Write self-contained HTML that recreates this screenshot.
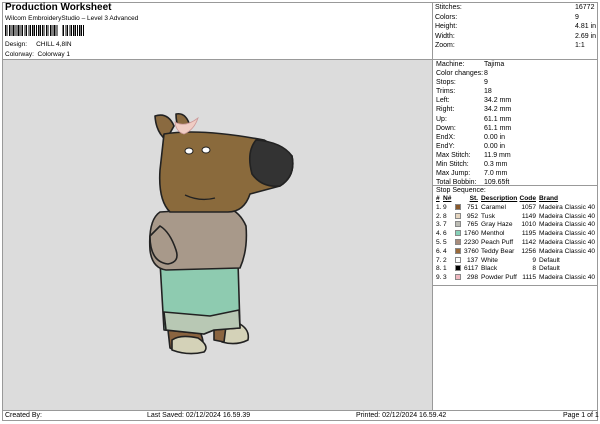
<!DOCTYPE html>
<html><head><style>
*{margin:0;padding:0;box-sizing:border-box}
body{width:600px;height:424px;background:#fff;font-family:"Liberation Sans",Arial,sans-serif;color:#000;position:relative;overflow:hidden}
.a{position:absolute;white-space:nowrap}
.s{font-size:7px}
.ln{position:absolute;background:#999}
table{border-collapse:collapse;font-size:6.6px;table-layout:fixed;width:160px}
td{padding:0;height:8.8px;line-height:8.8px;white-space:nowrap;overflow:visible}
.sw{display:inline-block;width:6px;height:6px;border:1px solid #888;vertical-align:-1px}
.r{text-align:right}
</style></head><body>
<div style="position:absolute;left:2px;top:2px;width:596px;height:419px;border:1px solid #999"></div>
<div class="ln" style="left:432px;top:2px;width:1px;height:408px"></div>
<div class="ln" style="left:2px;top:59px;width:596px;height:1px"></div>
<div class="ln" style="left:2px;top:410px;width:596px;height:1px"></div>
<div style="position:absolute;left:3px;top:60px;width:429px;height:350px;background:#dcdcdc"></div>

<div class="a" style="left:5px;top:2px;font-size:10px;font-weight:bold">Production Worksheet</div>
<div class="a" style="left:5px;top:15px;font-size:6.5px">Wilcom EmbroideryStudio – Level 3 Advanced</div>
<div class="a" style="left:5px;top:25px;width:79px;height:11px;background:repeating-linear-gradient(90deg,#000 0 1.5px,#fff 1.5px 2.4px,#000 2.4px 3.2px,#fff 3.2px 4.1px)"></div>
<div class="a" style="left:58px;top:25px;width:4px;height:12px;background:#fff"></div>
<div class="a" style="left:5px;top:41px;font-size:6.5px">Design:&nbsp;&nbsp;&nbsp;&nbsp;&nbsp;CHILL 4,8IN</div>
<div class="a" style="left:5px;top:51px;font-size:6.5px">Colorway:&nbsp; Colorway 1</div>

<div class="a s" style="left:435px;top:3px;line-height:9.5px">Stitches:<br>Colors:<br>Height:<br>Width:<br>Zoom:</div>
<div class="a s" style="left:575px;top:3px;line-height:9.5px">16772<br>9<br>4.81 in<br>2.69 in<br>1:1</div>

<div class="a s" style="left:436px;top:60px;line-height:9.1px">Machine:<br>Color changes:<br>Stops:<br>Trims:<br>Left:<br>Right:<br>Up:<br>Down:<br>EndX:<br>EndY:<br>Max Stitch:<br>Min Stitch:<br>Max Jump:<br>Total Bobbin:</div>
<div class="a s" style="left:484px;top:60px;line-height:9.1px">Tajima<br>8<br>9<br>18<br>34.2 mm<br>34.2 mm<br>61.1 mm<br>61.1 mm<br>0.00 in<br>0.00 in<br>11.9 mm<br>0.3 mm<br>7.0 mm<br>109.65ft</div>
<div class="ln" style="left:433px;top:185px;width:165px;height:1px"></div>
<div class="a s" style="left:436px;top:187px">Stop Sequence:</div>
<div class="ln" style="left:433px;top:285px;width:165px;height:1px"></div>
<table style="position:absolute;left:436px;top:195px">
<colgroup><col style="width:7px"><col style="width:12px"><col style="width:9px"><col style="width:14px"><col style="width:39px"><col style="width:19px"><col style="width:60px"></colgroup>
<tr style="font-weight:bold;text-decoration:underline"><td>#</td><td>N#</td><td></td><td class="r">St.</td><td style="padding-left:3px">Description</td><td class="r">Code</td><td style="padding-left:3px">Brand</td></tr>
<tr><td>1.</td><td>9</td><td><span class="sw" style="background:#8a5a2c"></span></td><td class="r">751</td><td style="padding-left:3px">Caramel</td><td class="r">1057</td><td style="padding-left:3px">Madeira Classic 40</td></tr>
<tr><td>2.</td><td>8</td><td><span class="sw" style="background:#e6d6c0"></span></td><td class="r">952</td><td style="padding-left:3px">Tusk</td><td class="r">1149</td><td style="padding-left:3px">Madeira Classic 40</td></tr>
<tr><td>3.</td><td>7</td><td><span class="sw" style="background:#bcbcb4"></span></td><td class="r">765</td><td style="padding-left:3px">Gray Haze</td><td class="r">1010</td><td style="padding-left:3px">Madeira Classic 40</td></tr>
<tr><td>4.</td><td>6</td><td><span class="sw" style="background:#86d0b8"></span></td><td class="r">1760</td><td style="padding-left:3px">Menthol</td><td class="r">1195</td><td style="padding-left:3px">Madeira Classic 40</td></tr>
<tr><td>5.</td><td>5</td><td><span class="sw" style="background:#a88c7c"></span></td><td class="r">2230</td><td style="padding-left:3px">Peach Puff</td><td class="r">1142</td><td style="padding-left:3px">Madeira Classic 40</td></tr>
<tr><td>6.</td><td>4</td><td><span class="sw" style="background:#9a6a3a"></span></td><td class="r">3760</td><td style="padding-left:3px">Teddy Bear</td><td class="r">1256</td><td style="padding-left:3px">Madeira Classic 40</td></tr>
<tr><td>7.</td><td>2</td><td><span class="sw" style="background:#fff"></span></td><td class="r">137</td><td style="padding-left:3px">White</td><td class="r">9</td><td style="padding-left:3px">Default</td></tr>
<tr><td>8.</td><td>1</td><td><span class="sw" style="background:#000"></span></td><td class="r">6117</td><td style="padding-left:3px">Black</td><td class="r">8</td><td style="padding-left:3px">Default</td></tr>
<tr><td>9.</td><td>3</td><td><span class="sw" style="background:#f0b8c0"></span></td><td class="r">298</td><td style="padding-left:3px">Powder Puff</td><td class="r">1115</td><td style="padding-left:3px">Madeira Classic 40</td></tr>
</table>

<svg style="position:absolute;left:0;top:0" width="432" height="410">
<g stroke="#222" stroke-width="1.6" stroke-linejoin="round">
<path d="M168 330 L170 348 Q180 354 200 352 Q206 344 200 332 Z" fill="#8a6440"/>
<path d="M172 340 Q180 334 198 338 Q210 346 204 352 Q188 356 172 350 Z" fill="#d4d2b8"/>
<path d="M218 326 L222 342 Q236 346 248 340 Q250 330 240 324 Z" fill="#d4d2b8"/>
<path d="M214 326 L226 326 L224 342 L214 340 Z" fill="#8a6440"/>
<path d="M160 262 L164 330 L204 334 L214 330 L240 328 L238 262 Z" fill="#8ecbb0"/>
<path d="M164 312 L166 330 L204 334 L214 330 L240 328 L239 310 L210 316 Z" fill="#b8c8b4"/>
<path d="M160 212 Q148 220 150 250 Q152 268 166 270 L240 268 Q248 250 246 226 Q240 212 228 208 Z" fill="#a8998a"/>
<path d="M150 236 Q150 262 168 264 Q180 262 176 250 Q170 232 160 226 Z" fill="#a8998a"/>
<path d="M155 116 Q168 112 174 126 L166 140 Q156 132 155 116 Z" fill="#8a6a40"/>
<path d="M176 114 Q186 112 190 126 L182 134 Q176 126 176 114 Z" fill="#8a6a40"/>
<path d="M164 134 Q200 128 264 140 L292 156 Q296 176 280 186 L250 194 Q244 212 228 212 L170 212 Q158 200 160 170 Z" fill="#8a6a3c"/>
<path d="M256 140 Q282 142 292 156 Q296 176 280 186 Q262 188 252 174 Q246 152 256 140 Z" fill="#333"/>
</g>
<path d="M175 122 Q185 128 198 118 Q194 130 184 134 Q176 132 175 122 Z" fill="#f0cdc4" stroke="#c99" stroke-width="0.8"/>
<ellipse cx="189" cy="151" rx="4" ry="3" fill="#fff" stroke="#222"/>
<ellipse cx="206" cy="150" rx="4" ry="3" fill="#fff" stroke="#222"/>
<path d="M185 195 Q200 202 215 198" fill="none" stroke="#222" stroke-width="1.3"/>
</svg>

<div class="a s" style="left:5px;top:412px">Created By:</div>
<div class="a s" style="left:147px;top:412px">Last Saved: 02/12/2024 16.59.39</div>
<div class="a s" style="left:356px;top:412px">Printed: 02/12/2024 16.59.42</div>
<div class="a s" style="left:563px;top:412px">Page 1 of 1</div>
</body></html>
